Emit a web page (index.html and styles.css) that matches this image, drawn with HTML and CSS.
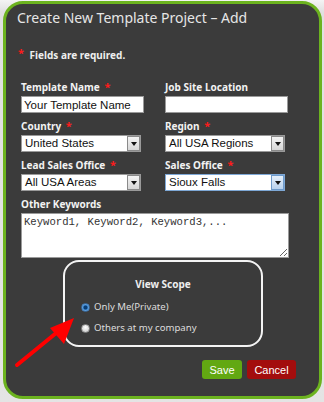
FILE: index.html
```html
<!DOCTYPE html>
<html lang="en">
<head>
    <meta charset="UTF-8">
    <title>Create New Template Project - Add</title>
    <link rel="stylesheet" href="styles.css">
</head>
<body>
    <div class="panel">
        <h1 class="title">Create New Template Project &ndash; Add</h1>
        <p class="note"><span class="req">*</span> Fields are required.</p>

        <div class="form-grid">
            <div class="field">
                <label>Template Name <span class="req">*</span></label>
                <input class="text" type="text" value="Your Template Name">
            </div>
            <div class="field">
                <label>Job Site Location</label>
                <input class="text" type="text" value="">
            </div>
            <div class="field">
                <label>Country <span class="req">*</span></label>
                <div class="select">
                    <span class="select-value">United States</span>
                    <span class="select-btn"><i class="caret"></i></span>
                </div>
            </div>
            <div class="field">
                <label>Region <span class="req">*</span></label>
                <div class="select">
                    <span class="select-value">All USA Regions</span>
                    <span class="select-btn"><i class="caret"></i></span>
                </div>
            </div>
            <div class="field">
                <label>Lead Sales Office <span class="req">*</span></label>
                <div class="select">
                    <span class="select-value">All USA Areas</span>
                    <span class="select-btn"><i class="caret"></i></span>
                </div>
            </div>
            <div class="field">
                <label>Sales Office <span class="req">*</span></label>
                <div class="select focused">
                    <span class="select-value">Sioux Falls</span>
                    <span class="select-btn"><i class="caret"></i></span>
                </div>
            </div>
            <div class="field wide">
                <label>Other Keywords</label>
                <textarea class="keywords">Keyword1, Keyword2, Keyword3,...</textarea>
            </div>
        </div>

        <div class="scope">
            <h2 class="scope-title">View Scope</h2>
            <label class="radio"><span class="dot checked"></span>Only Me(Private)</label>
            <label class="radio"><span class="dot"></span>Others at my company</label>
        </div>

        <div class="actions">
            <button class="btn save">Save</button>
            <button class="btn cancel">Cancel</button>
        </div>
    </div>

    <svg class="pointer" width="80" height="70" viewBox="0 0 80 70">
        <line x1="7" y1="55" x2="56" y2="15" stroke="#f00" stroke-width="4" stroke-linecap="round"/>
        <polygon points="64,8 40,18 54,34" fill="#f00"/>
    </svg>
</body>
</html>
```

FILE: styles.css
```css
* {
    box-sizing: border-box;
    margin: 0;
    padding: 0;
}

body {
    background: linear-gradient(to bottom, #f4f4f4 0, #e0e0e0 12px, #e4e4e4 100%);
    font-family: 'Noto Sans', sans-serif;
    height: 402px;
    overflow: hidden;
    padding: 1px 2px 0 3px;
}

.panel {
    background-color: #3b3b3b;
    border: 3px solid #6cb31f;
    border-radius: 20px;
    height: 398px;
    width: 319px;
}

.title {
    color: #e6e6e6;
    font-size: 14px;
    font-weight: 400;
    line-height: 20px;
    padding: 4px 0 0 11px;
}

.note {
    color: #eeeeee;
    font-size: 10px;
    font-weight: 700;
    line-height: 14px;
    margin-top: 18px;
    padding-left: 12px;
}

.req {
    color: #ff1a1a;
    font-size: 11px;
    font-weight: 700;
}

.note .req {
    margin-right: 3px;
    vertical-align: 2px;
}

.form-grid {
    display: grid;
    grid-template-columns: 144px 144px;
    row-gap: 7px;
    margin-top: 19px;
    padding-left: 15px;
}

.field label {
    color: #f2f2f2;
    display: block;
    font-size: 10px;
    font-weight: 700;
    line-height: 12px;
    margin-bottom: 3px;
}

.field .req {
    margin-left: 2px;
}

.field.wide {
    grid-column: 1 / 3;
}

.text {
    background: #fff;
    border: 1px solid #9a9a9a;
    color: #111;
    display: block;
    font-family: 'Liberation Sans', Arial, sans-serif;
    font-size: 11.5px;
    height: 17px;
    padding: 0 2px;
    width: 123px;
}

.text:focus,
.keywords:focus {
    outline: none;
}

.select {
    background: #fff;
    border: 1px solid #9a9a9a;
    display: flex;
    height: 17px;
    width: 120px;
}

.select-value {
    color: #111;
    flex: 1;
    font-family: 'Liberation Sans', Arial, sans-serif;
    font-size: 11.5px;
    line-height: 15px;
    padding-left: 3px;
}

.select-btn {
    align-items: center;
    background: linear-gradient(to bottom, #f4f4f4, #d6d6d6);
    border: 1px solid #8a8a8a;
    display: flex;
    justify-content: center;
    width: 13px;
}

.caret {
    border-left: 3px solid transparent;
    border-right: 3px solid transparent;
    border-top: 4px solid #111;
    display: block;
    height: 0;
    margin-top: 1px;
    width: 0;
}

.select.focused {
    border-color: #7ea8d6;
}

.select.focused .select-btn {
    background: linear-gradient(to bottom, #e6f0fb, #b9d2ee);
    border-color: #6f9bcb;
}

.keywords {
    background: #fff;
    border: 1px solid #9a9a9a;
    color: #333;
    display: block;
    font-family: 'Liberation Mono', 'Courier New', monospace;
    font-size: 10.6px;
    height: 45px;
    line-height: 13px;
    padding: 2px 2px;
    resize: both;
    width: 268px;
}

.scope {
    border: 2px solid #f4f4f4;
    border-radius: 16px;
    height: 87px;
    margin: 2px 0 0 57px;
    padding: 15px 0 0 16px;
    width: 200px;
}

.scope-title {
    color: #eeeeee;
    font-size: 10px;
    font-weight: 700;
    line-height: 14px;
    padding-right: 16px;
    text-align: center;
}

.radio {
    align-items: center;
    color: #dddddd;
    display: flex;
    font-size: 9.6px;
    line-height: 14px;
    margin-top: 9px;
}

.radio + .radio {
    margin-top: 7px;
}

.dot {
    background: radial-gradient(circle at 50% 35%, #ffffff, #c4c4c4);
    border: 1px solid #8e8e8e;
    border-radius: 50%;
    display: inline-block;
    height: 9px;
    margin-right: 4px;
    width: 9px;
}

.dot.checked {
    background: radial-gradient(circle, #0a3d73 0, #0a3d73 1.5px, #3f8bd6 2.5px, #a7cff3 4.5px);
    border-color: #3a6ea5;
}

.actions {
    display: flex;
    gap: 5px;
    justify-content: flex-end;
    margin-top: 13px;
    padding-right: 23px;
}

.btn {
    border: none;
    border-radius: 3px;
    color: #fff;
    font-family: 'Liberation Sans', Arial, sans-serif;
    font-size: 11px;
    height: 19px;
}

.save {
    background-color: #62a812;
    width: 40px;
}

.cancel {
    background-color: #a30d0d;
    width: 49px;
}

.pointer {
    left: 10px;
    position: absolute;
    top: 310px;
}
```
